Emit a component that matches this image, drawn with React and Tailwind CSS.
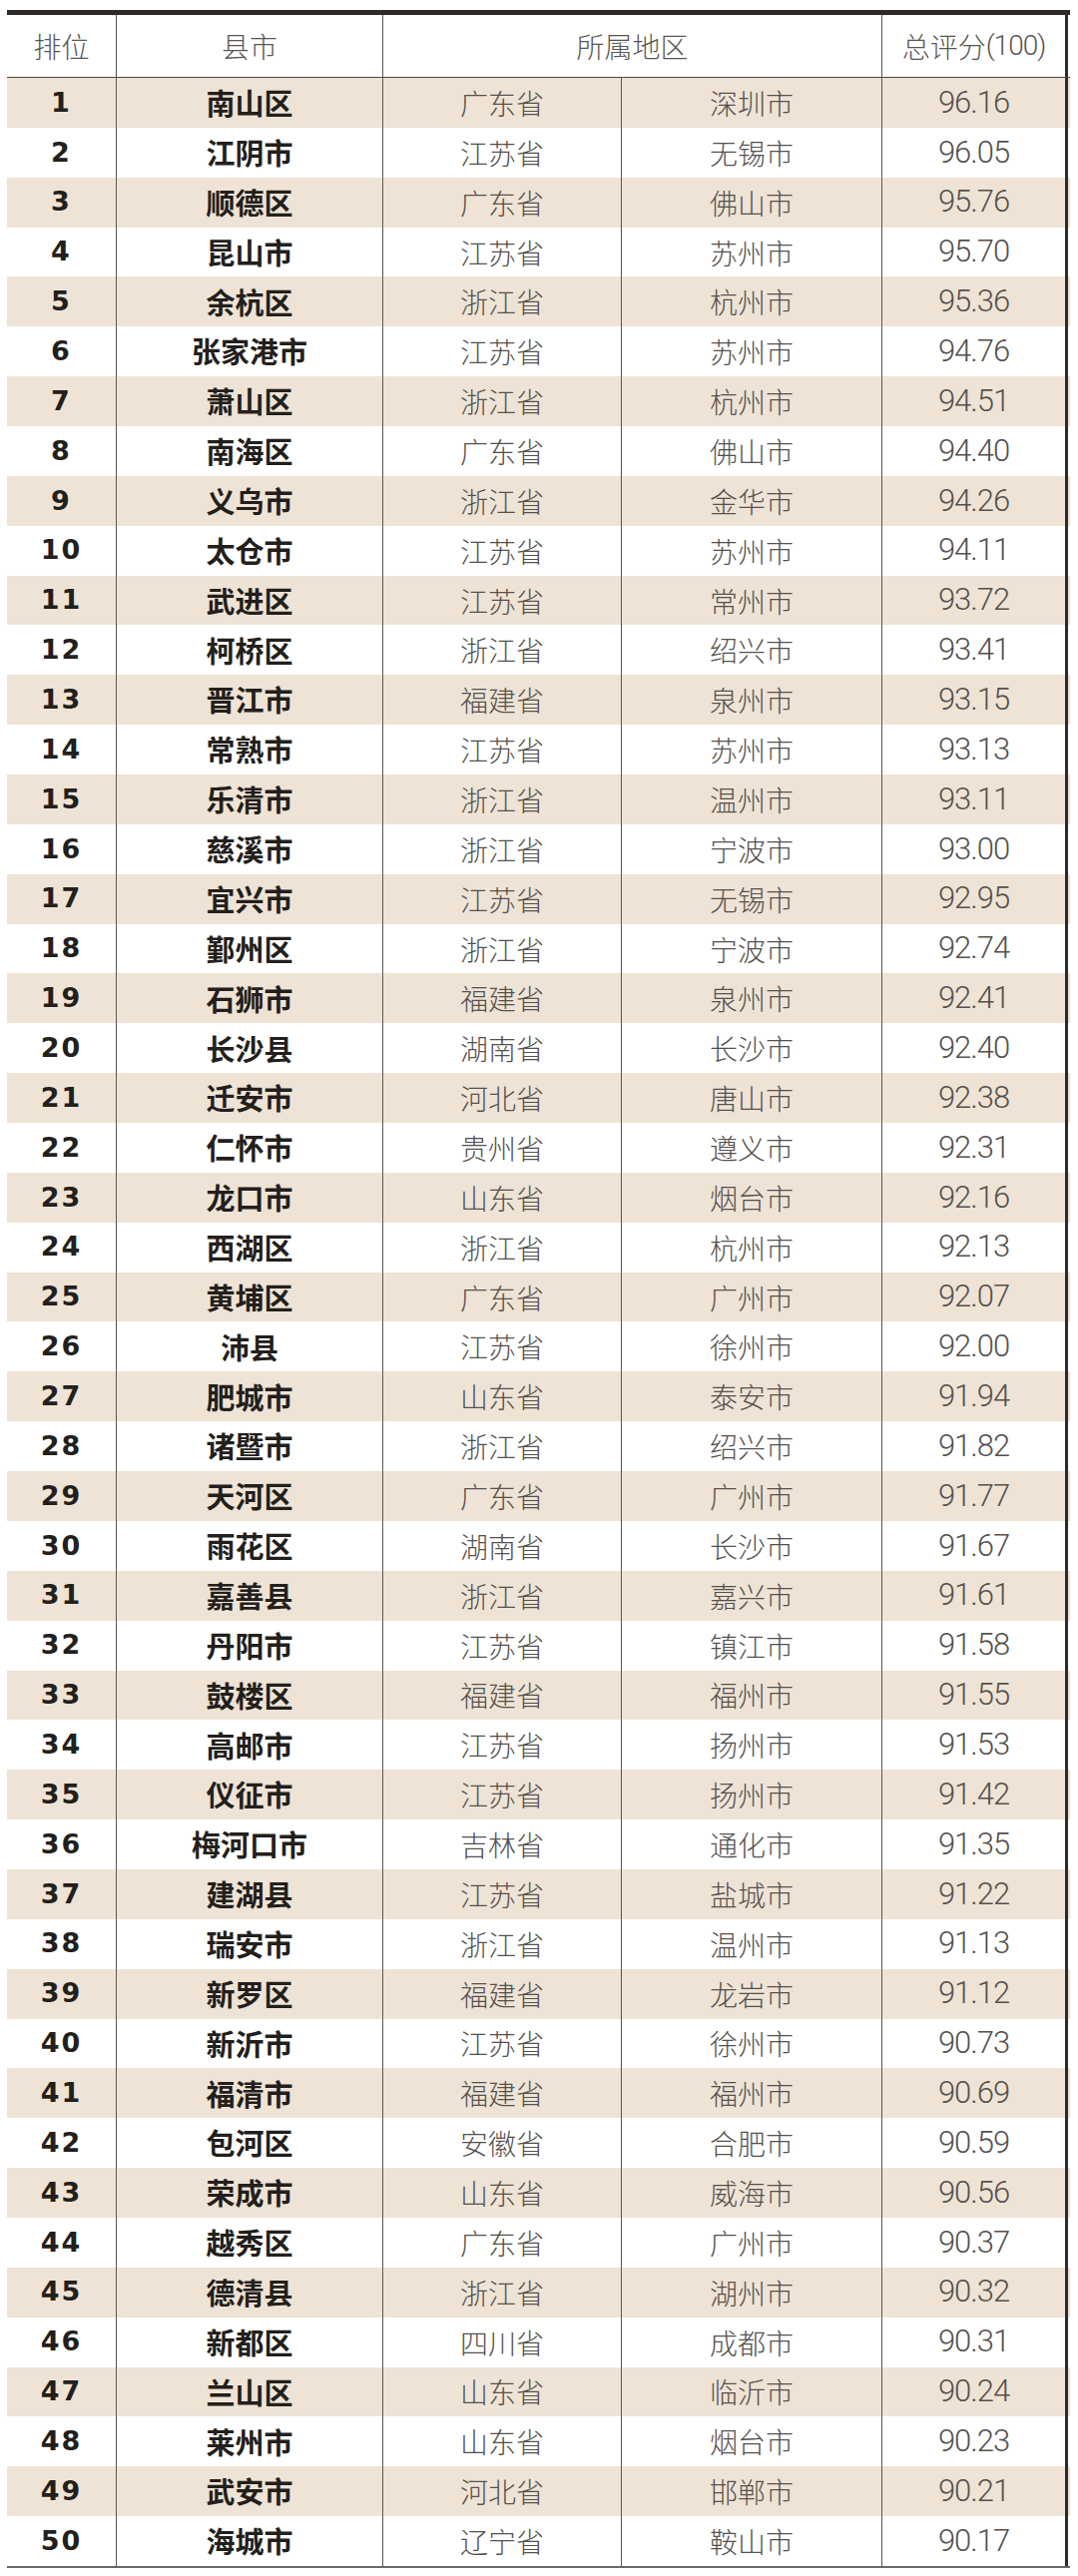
import React from "react";

const raw = `南山区 广东省 深圳市 96.16
江阴市 江苏省 无锡市 96.05
顺德区 广东省 佛山市 95.76
昆山市 江苏省 苏州市 95.70
余杭区 浙江省 杭州市 95.36
张家港市 江苏省 苏州市 94.76
萧山区 浙江省 杭州市 94.51
南海区 广东省 佛山市 94.40
义乌市 浙江省 金华市 94.26
太仓市 江苏省 苏州市 94.11
武进区 江苏省 常州市 93.72
柯桥区 浙江省 绍兴市 93.41
晋江市 福建省 泉州市 93.15
常熟市 江苏省 苏州市 93.13
乐清市 浙江省 温州市 93.11
慈溪市 浙江省 宁波市 93.00
宜兴市 江苏省 无锡市 92.95
鄞州区 浙江省 宁波市 92.74
石狮市 福建省 泉州市 92.41
长沙县 湖南省 长沙市 92.40
迁安市 河北省 唐山市 92.38
仁怀市 贵州省 遵义市 92.31
龙口市 山东省 烟台市 92.16
西湖区 浙江省 杭州市 92.13
黄埔区 广东省 广州市 92.07
沛县 江苏省 徐州市 92.00
肥城市 山东省 泰安市 91.94
诸暨市 浙江省 绍兴市 91.82
天河区 广东省 广州市 91.77
雨花区 湖南省 长沙市 91.67
嘉善县 浙江省 嘉兴市 91.61
丹阳市 江苏省 镇江市 91.58
鼓楼区 福建省 福州市 91.55
高邮市 江苏省 扬州市 91.53
仪征市 江苏省 扬州市 91.42
梅河口市 吉林省 通化市 91.35
建湖县 江苏省 盐城市 91.22
瑞安市 浙江省 温州市 91.13
新罗区 福建省 龙岩市 91.12
新沂市 江苏省 徐州市 90.73
福清市 福建省 福州市 90.69
包河区 安徽省 合肥市 90.59
荣成市 山东省 威海市 90.56
越秀区 广东省 广州市 90.37
德清县 浙江省 湖州市 90.32
新都区 四川省 成都市 90.31
兰山区 山东省 临沂市 90.24
莱州市 山东省 烟台市 90.23
武安市 河北省 邯郸市 90.21
海城市 辽宁省 鞍山市 90.17`;

const rows = raw.split("\n").map((line, i) => {
  const [county, province, city, score] = line.split(" ");
  return { rank: i + 1, county, province, city, score };
});

const cjk = "font-['Noto_Sans_CJK_SC',sans-serif]";

const App = () => {
  return (
    <div className="w-[1080px] h-[2581px] bg-white pt-[10px] pl-[7px]">
      <div className="w-[1065px] border-t-[5px] border-[#2e2a27]">
        {/* header */}
        <div className={`grid grid-cols-[110px_267px_239px_261px_186px] h-[63px] border-b-[1.5px] border-[#4a4644] text-[#5a5653] text-[28px] font-light ${cjk}`}>
          <div className="flex items-center justify-center border-r-[1.5px] border-[#5a5653]">排位</div>
          <div className="flex items-center justify-center border-r-[1.5px] border-[#5a5653]">县市</div>
          <div className="col-span-2 flex items-center justify-center border-r-[1.5px] border-[#5a5653]">所属地区</div>
          <div className="flex items-center justify-center border-r-[3px] border-[#2e2a27]">
            总评分<span className="font-['Roboto',sans-serif] font-light text-[28px] tracking-[-1px]">(100)</span>
          </div>
        </div>
        {/* body */}
        {rows.map((r) => (
          <div
            key={r.rank}
            className={`grid grid-cols-[110px_267px_239px_261px_186px] h-[49.86px] ${r.rank % 2 === 1 ? "bg-[#efe3d5]" : "bg-white"}`}
          >
            <div className="flex items-center justify-center border-r-[1.5px] border-[#5a5653] font-['DejaVu_Sans',sans-serif] font-bold text-[27px] text-[#231f1c] tracking-[2px]">
              {r.rank}
            </div>
            <div className={`flex items-center justify-center border-r-[1.5px] border-[#5a5653] ${cjk} font-bold text-[29px] text-[#231f1c]`}>
              {r.county}
            </div>
            <div className={`flex items-center justify-center border-r-[1.5px] border-[#5a5653] ${cjk} font-light text-[28px] text-[#55514e]`}>
              {r.province}
            </div>
            <div className={`flex items-center justify-center border-r-[1.5px] border-[#5a5653] ${cjk} font-light text-[28px] text-[#55514e]`}>
              {r.city}
            </div>
            <div className="flex items-center justify-center border-r-[3px] border-[#2e2a27] font-['Roboto',sans-serif] font-light text-[31px] tracking-[-1px] text-[#55514e]">
              {r.score}
            </div>
          </div>
        ))}
        <div className="h-[2px] bg-[#6a6663]" />
      </div>
    </div>
  );
};

export default App;
